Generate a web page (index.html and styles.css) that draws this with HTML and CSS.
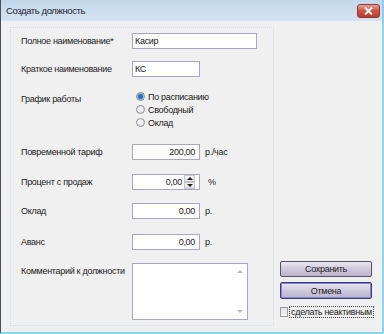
FILE: index.html
```html
<!DOCTYPE html>
<html lang="ru">
<head>
  <meta charset="UTF-8">
  <title>Создать должность</title>
  <link rel="stylesheet" href="styles.css">
</head>
<body>
  <div class="window">
    <div class="titlebar">
      <span class="title">Создать должность</span>
      <span class="close">
        <svg width="9" height="8" viewBox="0 0 9 8"><path d="M1 0.5 L8 7.5 M8 0.5 L1 7.5" stroke="#fff" stroke-width="2"/></svg>
      </span>
    </div>

    <div class="content">
      <div class="panel">
        <div class="row r-name">
          <span class="label">Полное наименование*</span>
          <div class="field wide">Касир</div>
        </div>
        <div class="row r-short">
          <span class="label">Краткое наименование</span>
          <div class="field">КС</div>
        </div>
        <div class="row r-schedule">
          <span class="label">График работы</span>
          <div class="radios">
            <div class="radio checked"><span class="dot"></span>По расписанию</div>
            <div class="radio"><span class="dot"></span>Свободный</div>
            <div class="radio"><span class="dot"></span>Оклад</div>
          </div>
        </div>
        <div class="row r-tariff">
          <span class="label">Повременной тариф</span>
          <div class="field num">200,00</div>
          <span class="unit">р./час</span>
        </div>
        <div class="row r-percent">
          <span class="label">Процент с продаж</span>
          <div class="field num spin">
            <span class="val">0,00</span>
            <span class="arrows">
              <span class="arr up"></span>
              <span class="arr down"></span>
            </span>
          </div>
          <span class="unit pct">%</span>
        </div>
        <div class="row r-salary">
          <span class="label">Оклад</span>
          <div class="field num">0,00</div>
          <span class="unit">р.</span>
        </div>
        <div class="row r-advance">
          <span class="label">Аванс</span>
          <div class="field num">0,00</div>
          <span class="unit">р.</span>
        </div>
        <div class="row r-comment">
          <span class="label">Комментарий к должности</span>
          <div class="memo">
            <span class="sb up"></span>
            <span class="sb down"></span>
          </div>
        </div>
      </div>

      <div class="side">
        <button class="btn">Сохранить</button>
        <button class="btn default">Отмена</button>
        <label class="check"><span class="box"></span><span class="focus">сделать неактивным</span></label>
      </div>
    </div>
  </div>
</body>
</html>
```

FILE: styles.css
```css
*{margin:0;padding:0;box-sizing:border-box;}
body{width:384px;height:334px;overflow:hidden;background:#f0f0f0;font-family:"Liberation Sans", Arial, sans-serif;font-size:9px;letter-spacing:-0.3px;color:#1b1b1b;white-space:nowrap;}
.window{display:flex;flex-direction:column;width:384px;height:334px;border-left:1px solid #4a4f57;border-right:2px solid #8fd3ea;border-bottom:2px solid #8fd3ea;background:#f0f0f0;}

.titlebar{display:flex;justify-content:space-between;align-items:center;height:21px;padding:0 0 0 5px;background:linear-gradient(#c3d7ec, #d5e3f2);}
.title{font-size:9.5px;letter-spacing:-0.4px;color:#1e2430;}
.close{display:flex;justify-content:center;align-items:center;width:23px;height:14px;margin-right:2px;border:1px solid #8a3a32;border-radius:3px;background:linear-gradient(#e9a093, #d0503f 50%, #c13a2b);}

.content{display:flex;flex:1;}
.panel{width:264px;height:299px;margin:6px 0 0 9px;padding:5px 0 0 10px;border:1px dotted #cfdde9;}
.row{display:flex;align-items:center;}
.label{width:111px;flex:none;}
.field{width:68px;height:16px;padding:0 2px;border:1px solid #a7a6c9;background:#fff;line-height:14px;}
.field.wide{width:125px;}
.field.num{text-align:right;padding-right:4px;}
.unit{margin-left:5px;}
.unit.pct{margin-left:8px;}

.r-short{margin-top:12px;}
.r-schedule{align-items:flex-start;margin-top:13px;}
.r-schedule .label{padding-top:4px;}
.r-tariff{margin-top:15px;}
.r-percent{margin-top:14px;}
.r-salary{margin-top:13px;}
.r-advance{margin-top:15px;}
.r-comment{align-items:flex-start;margin-top:13px;}
.r-comment .label{padding-top:3px;}

.radios{display:flex;flex-direction:column;padding-left:4px;}
.radio{display:flex;align-items:center;height:13px;}
.dot{width:9px;height:9px;margin-right:3px;border:1px solid #8d8f94;border-radius:50%;background:radial-gradient(circle at 40% 35%, #ffffff, #d6d8dc);}
.radio.checked .dot{background:radial-gradient(circle, #2b6fc2 0 2px, #8fb4e0 3px, #eef2f7 4px);}

.spin{display:flex;justify-content:flex-end;align-items:center;padding-right:1px;}
.spin .val{margin-right:2px;}
.arrows{display:flex;flex-direction:column;width:11px;height:14px;}
.arr{flex:1;display:flex;justify-content:center;align-items:center;border:1px solid #c5c5cf;background:linear-gradient(#f6f6f8, #dcdce2);}
.arr.up::after{content:"";border:3px solid transparent;border-top:0;border-bottom:3px solid #222;}
.arr.down::after{content:"";border:3px solid transparent;border-bottom:0;border-top:3px solid #222;}

.memo{position:relative;width:116px;height:57px;border:1px solid #a7a6c9;background:#fff;}
.sb{position:absolute;right:4px;width:0;height:0;border:3px solid transparent;}
.sb.up{top:6px;border-top:0;border-bottom:3px solid #b9b9b9;}
.sb.down{bottom:6px;border-bottom:0;border-top:3px solid #b9b9b9;}

.side{display:flex;flex-direction:column;width:94px;margin:240px 0 0 6px;}
.btn{width:92px;height:16px;margin-bottom:5px;border:1px solid #57506a;border-radius:2px;background:linear-gradient(#ebe8f1, #cfc9dc 50%, #bdb5cc);font-family:inherit;font-size:9px;letter-spacing:-0.3px;color:#1b1b1b;}
.btn.default{height:17px;border-color:#3d3a8e;box-shadow:inset 0 0 0 1px #8a86c9;}
.check{display:flex;align-items:center;margin-top:2px;}
.box{width:9px;height:10px;margin-right:1px;border:1px solid #9a9aa2;background:linear-gradient(#e2e2e6, #f7f7f9);}
.focus{padding:0 1px;border:1px dotted #444;line-height:10px;}
```
